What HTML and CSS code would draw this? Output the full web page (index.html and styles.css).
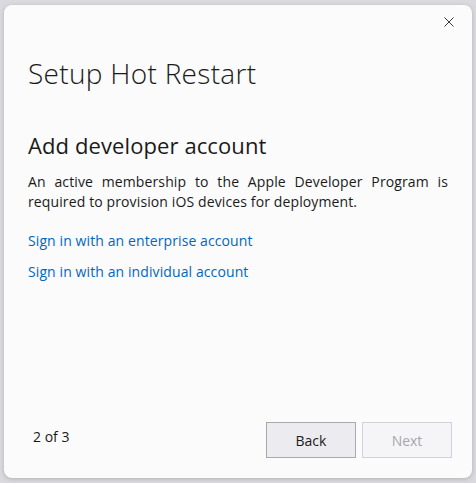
FILE: index.html
```html
<!DOCTYPE html>
<html>
<head>
<meta charset="utf-8">
<link rel="stylesheet" href="styles.css">
</head>
<body>
<div class="dialog">
  <div class="titlebar">
    <button class="close" aria-label="Close">
      <svg width="10" height="10" viewBox="0 0 10 10"><path d="M0.5 0.5 L9.5 9.5 M9.5 0.5 L0.5 9.5" stroke="#3a3a3a" stroke-width="1" fill="none"/></svg>
    </button>
  </div>
  <div class="content">
    <h1 class="title">Setup Hot Restart</h1>
    <h2 class="heading">Add developer account</h2>
    <p class="desc">An active membership to the Apple Developer Program is required to provision iOS devices for deployment.</p>
    <a class="link link-first" href="#">Sign in with an enterprise account</a>
    <a class="link link-second" href="#">Sign in with an individual account</a>
  </div>
  <div class="footer">
    <span class="step">2 of 3</span>
    <div class="buttons">
      <button class="btn">Back</button>
      <button class="btn btn-disabled" disabled>Next</button>
    </div>
  </div>
</div>
</body>
</html>
```
FILE: styles.css
```css
html, body {
  margin: 0;
  padding: 0;
  width: 476px;
  height: 483px;
  background: #d9d9de;
  overflow: hidden;
}
body {
  font-family: "Open Sans", "Noto Sans", sans-serif;
  color: #1a1a1a;
  padding: 5px 4px 5px 4px;
  box-sizing: border-box;
}
.dialog {
  width: 468px;
  height: 473px;
  background: #fbfbfc;
  border-radius: 8px;
  box-shadow: 0 1px 4px rgba(0,0,0,0.18);
  display: flex;
  flex-direction: column;
  box-sizing: border-box;
}
.titlebar {
  display: flex;
  justify-content: flex-end;
  padding: 10px 16px 0 0;
  height: 12px;
}
.close {
  border: none;
  background: transparent;
  padding: 0;
  width: 14px;
  height: 14px;
  display: flex;
  align-items: center;
  justify-content: center;
}
.content {
  padding: 0 24px 0 24px;
  flex: 1;
  display: flex;
  flex-direction: column;
  align-items: flex-start;
}
.title {
  font-weight: 300;
  font-size: 28px;
  margin: 27px 0 0 0;
  line-height: 38px;
  letter-spacing: 0.3px;
}
.heading {
  font-weight: 400;
  font-size: 22px;
  margin: 38px 0 0 0;
  line-height: 30px;
  letter-spacing: 0.1px;
}
.desc {
  font-size: 14px;
  line-height: 20px;
  margin: 12px 0 0 0;
  text-align: justify;
  width: 420px;
  letter-spacing: 0.12px;
}
.link {
  color: #0067c0;
  text-decoration: none;
  font-size: 14px;
  line-height: 20px;
  letter-spacing: 0.1px;
}
.link-first {
  margin-top: 19px;
}
.link-second {
  margin-top: 11px;
}
.footer {
  display: flex;
  align-items: center;
  justify-content: space-between;
  padding: 0 20px 20px 29px;
}
.step {
  font-size: 14px;
  margin-top: -8px;
}
.buttons {
  display: flex;
  gap: 6px;
}
.btn {
  width: 90px;
  height: 36px;
  border: 1px solid #a9a9ab;
  background: #ececf0;
  font-family: "Open Sans", "Noto Sans", sans-serif;
  font-size: 14px;
  color: #1a1a1a;
  padding: 0;
}
.btn-disabled {
  border-color: #d2d2da;
  background: #f5f5f7;
  color: #a7a7aa;
}
```
